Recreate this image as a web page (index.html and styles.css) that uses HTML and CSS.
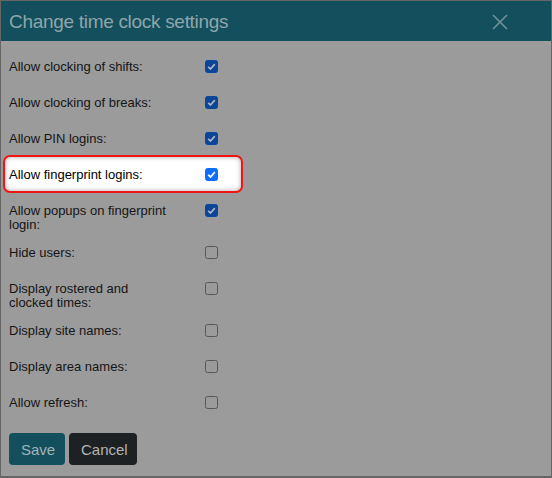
FILE: index.html
```html
<!DOCTYPE html>
<html>
<head>
<meta charset="utf-8">
<link rel="stylesheet" href="styles.css">
</head>
<body>
<div class="dialog">
  <div class="header">
    <span class="title">Change time clock settings</span>
    <svg class="close" width="16" height="16" viewBox="0 0 16 16"><path d="M1 1 L15 15 M15 1 L1 15" stroke="#6f9298" stroke-width="1.6" fill="none"/></svg>
  </div>
  <div class="body">
    <div class="row"><span class="label">Allow clocking of shifts:</span><span class="cb checked"><svg viewBox="0 0 13 13"><path d="M3.2 6.8 L5.5 9 L9.8 4.2" stroke="#a7b3c4" stroke-width="1.8" fill="none"/></svg></span></div>
    <div class="row"><span class="label">Allow clocking of breaks:</span><span class="cb checked"><svg viewBox="0 0 13 13"><path d="M3.2 6.8 L5.5 9 L9.8 4.2" stroke="#a7b3c4" stroke-width="1.8" fill="none"/></svg></span></div>
    <div class="row"><span class="label">Allow PIN logins:</span><span class="cb checked"><svg viewBox="0 0 13 13"><path d="M3.2 6.8 L5.5 9 L9.8 4.2" stroke="#a7b3c4" stroke-width="1.8" fill="none"/></svg></span></div>
    <div class="row hl"><span class="label">Allow fingerprint logins:</span><span class="cb checked bright"><svg viewBox="0 0 13 13"><path d="M3.2 6.8 L5.5 9 L9.8 4.2" stroke="#ffffff" stroke-width="1.8" fill="none"/></svg></span></div>
    <div class="row"><span class="label">Allow popups on fingerprint login:</span><span class="cb checked"><svg viewBox="0 0 13 13"><path d="M3.2 6.8 L5.5 9 L9.8 4.2" stroke="#a7b3c4" stroke-width="1.8" fill="none"/></svg></span></div>
    <div class="row"><span class="label">Hide users:</span><span class="cb"></span></div>
    <div class="row"><span class="label">Display rostered and clocked times:</span><span class="cb"></span></div>
    <div class="row"><span class="label">Display site names:</span><span class="cb"></span></div>
    <div class="row"><span class="label">Display area names:</span><span class="cb"></span></div>
    <div class="row"><span class="label">Allow refresh:</span><span class="cb"></span></div>
    <div class="buttons">
      <button class="btn save">Save</button>
      <button class="btn cancel">Cancel</button>
    </div>
  </div>
</div>
</body>
</html>
```

FILE: styles.css
```css
html, body {
  margin: 0;
  padding: 0;
  background: #9b9b9b;
}
.dialog {
  width: 552px;
  height: 478px;
  box-sizing: border-box;
  border: 1px solid #666;
  border-bottom-width: 2px;
  background: #9b9b9b;
  font-family: "Liberation Sans", Arial, sans-serif;
}
.header {
  height: 40px;
  background: #134f5c;
  display: flex;
  align-items: center;
  justify-content: space-between;
  padding: 0 43px 0 8px;
}
.title {
  color: #8ea6ab;
  font-size: 19px;
  letter-spacing: -0.3px;
  padding-top: 1px;
}
.close {
  display: block;
  margin-top: 2px;
}
.body {
  padding: 12px 0 0 8px;
  display: flex;
  flex-direction: column;
}
.row {
  position: relative;
  display: flex;
  align-items: flex-start;
  min-height: 36px;
  box-sizing: border-box;
  padding: 7px 0;
  font-size: 13px;
  line-height: 14px;
  color: #151515;
}
.label {
  width: 160px;
  margin-right: 36px;
}
.cb {
  width: 13px;
  height: 13px;
  box-sizing: border-box;
  border: 1px solid #575757;
  border-radius: 2.5px;
  margin-top: 0;
  display: flex;
}
.cb svg {
  width: 13px;
  height: 13px;
  margin: -1px;
}
.cb.checked {
  background: #0b4596;
  border-color: #0b4596;
}
.cb.bright {
  background: #0d6efd;
  border-color: #0d6efd;
}
.hl {
  z-index: 1;
  color: #000;
}
.hl::before {
  content: "";
  position: absolute;
  left: -6px;
  top: -6px;
  width: 240px;
  height: 38px;
  box-sizing: border-box;
  border: 2px solid #f01414;
  border-radius: 7px;
  background: #fff;
  box-shadow: inset 0 0 5px rgba(0,0,0,0.35);
  z-index: -1;
}
.buttons {
  display: flex;
  gap: 4px;
  margin-top: 8px;
}
.btn {
  height: 32px;
  border: none;
  border-radius: 4px;
  font-family: "Liberation Sans", Arial, sans-serif;
  font-size: 15px;
  padding: 0 12px;
}
.save {
  background: #134f5c;
  color: #a1b4b8;
  width: 56px;
}
.cancel {
  background: #1d2124;
  color: #b4b4b4;
  width: 68px;
}
```
